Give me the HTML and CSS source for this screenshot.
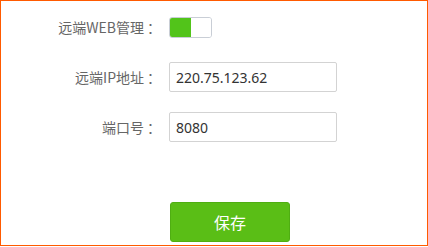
FILE: index.html
```html
<!DOCTYPE html>
<html lang="zh-CN">
<head>
<meta charset="utf-8">
<link rel="stylesheet" href="styles.css">
</head>
<body>
<div class="frame">
  <form class="form">
    <div class="row">
      <label class="label">远端WEB管理<span class="colon">：</span></label>
      <span class="toggle"><span class="toggle-on"></span><span class="toggle-off"></span></span>
    </div>
    <div class="row">
      <label class="label">远端IP地址<span class="colon">：</span></label>
      <input class="input" type="text" value="220.75.123.62">
    </div>
    <div class="row">
      <label class="label">端口号<span class="colon">：</span></label>
      <input class="input" type="text" value="8080">
    </div>
    <div class="actions">
      <button class="btn" type="button">保存</button>
    </div>
  </form>
</div>
</body>
</html>
```

FILE: styles.css
```css
html, body {
  margin: 0;
  padding: 0;
  background: #fff;
}
.frame {
  box-sizing: border-box;
  width: 428px;
  height: 246px;
  border: 1px solid #ff5a00;
  font-family: "Noto Sans CJK SC", "Noto Sans", sans-serif;
}
.form {
  margin: 0;
  padding-top: 11px;
  display: flex;
  flex-direction: column;
  gap: 20px;
}
.row {
  display: flex;
  align-items: center;
  height: 30px;
}
.label {
  width: 157px;
  box-sizing: border-box;
  text-align: right;
  font-size: 14px;
  color: #666;
  margin-right: 11px;
}
.colon {
  font-family: "Noto Sans CJK SC", sans-serif;
  margin-left: 3px;
  margin-right: -3px;
}
.toggle {
  display: flex;
  box-sizing: border-box;
  width: 43px;
  height: 21px;
  border: 1px solid #c9ced6;
  border-radius: 3px;
  overflow: hidden;
  background: #fff;
}
.toggle-on {
  width: 21px;
  background: #52c41a;
}
.toggle-off {
  flex: 1;
  background: #fff;
}
.input {
  box-sizing: border-box;
  width: 168px;
  height: 30px;
  border: 1px solid #d3d3d3;
  border-radius: 2px;
  padding: 0 6px;
  font-family: "Noto Sans", "Noto Sans CJK SC", sans-serif;
  font-size: 14px;
  color: #333;
  outline: none;
}
.actions {
  padding-left: 169px;
  margin-top: 40px;
}
.btn {
  box-sizing: border-box;
  width: 120px;
  height: 40px;
  background: #5abe16;
  border: 1px solid #4fae12;
  border-radius: 3px;
  color: #fff;
  font-family: "Noto Sans CJK SC", sans-serif;
  font-size: 16px;
  padding: 0;
}
```
